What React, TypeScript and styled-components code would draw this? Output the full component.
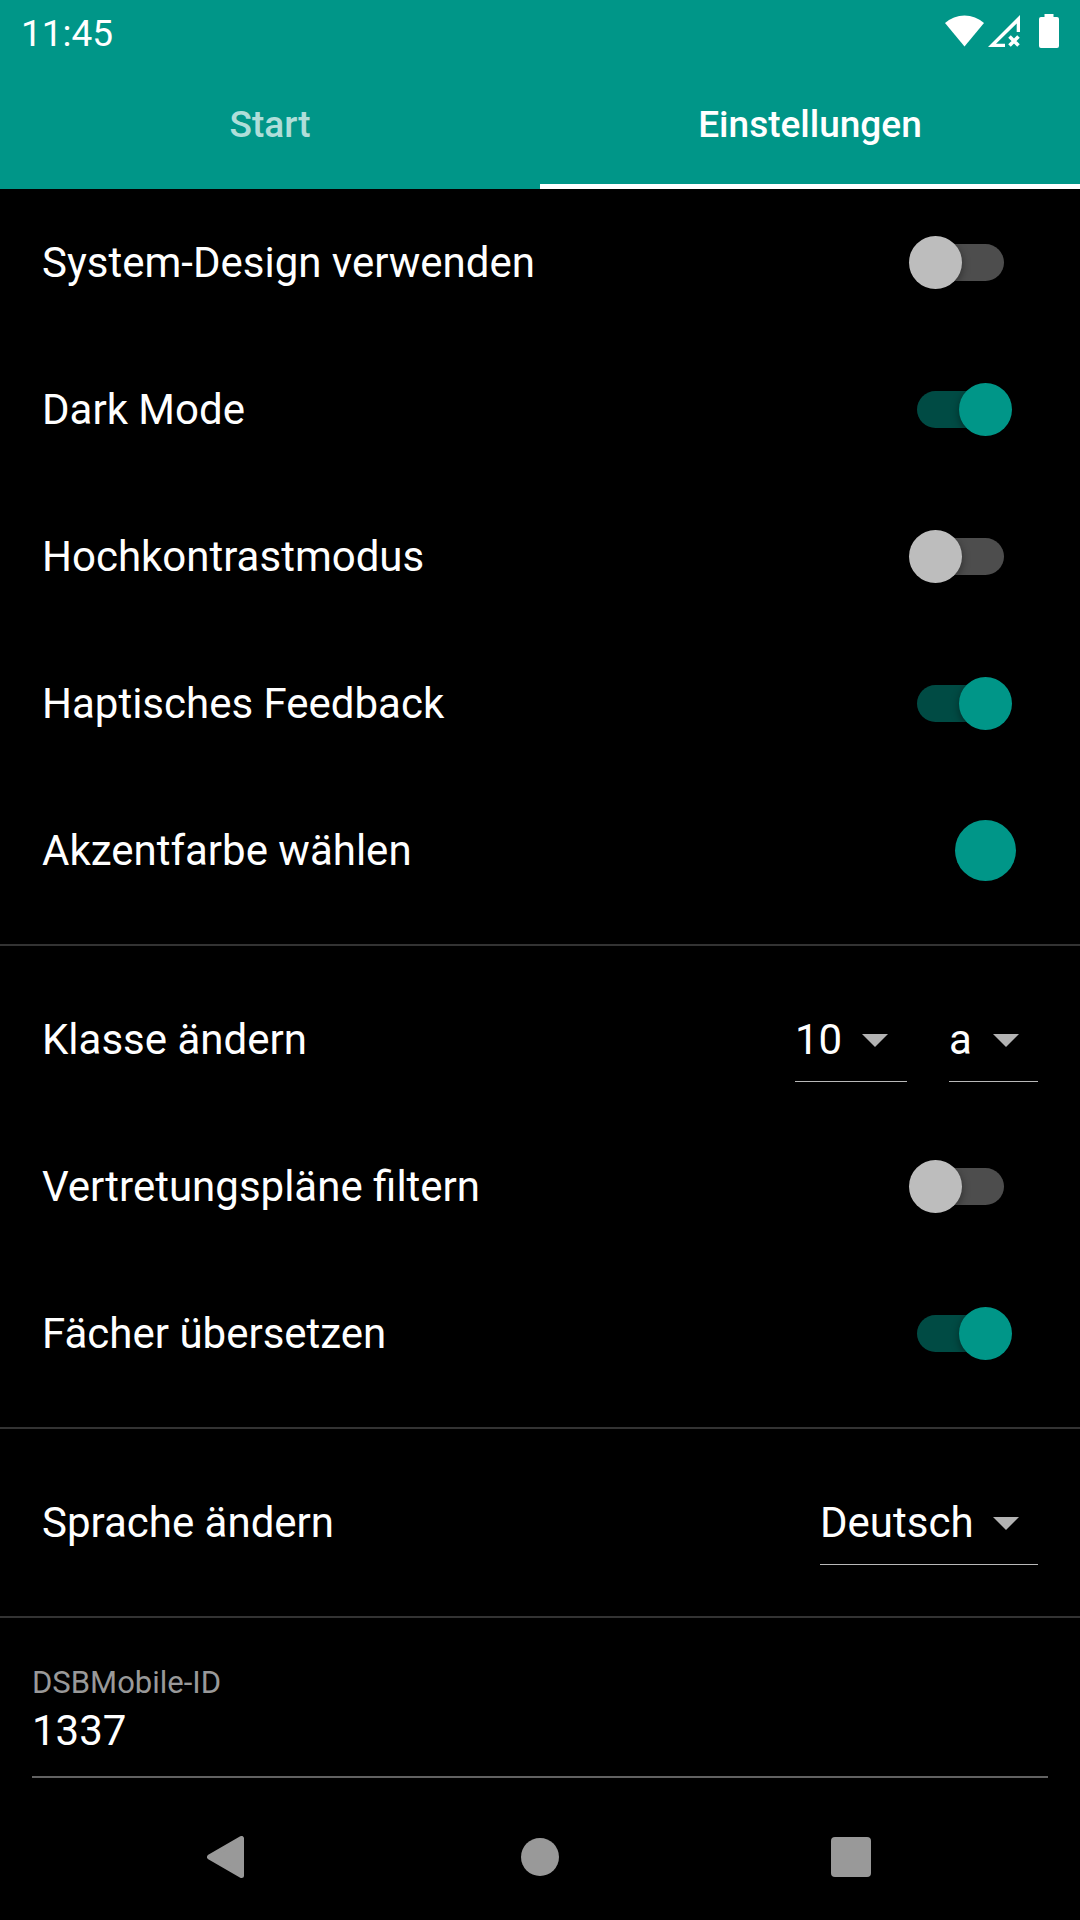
import React, { useState } from "react";
import styled, { createGlobalStyle } from "styled-components";

const GlobalStyle = createGlobalStyle`
  *, *::before { box-sizing: border-box; }
  body { margin: 0; background: #000; }
  button, input, select { font-family: inherit; margin: 0; }
`;

const accent = "#009688";

const Screen = styled.div`
  display: flex;
  flex-direction: column;
  min-height: 100vh;
  background: #000;
  color: #fff;
  font-family: Roboto, "Noto Sans", sans-serif;
  font-size: 42px;
  line-height: 50px;
`;

const Header = styled.header`
  background: ${accent};
`;

const StatusBar = styled.div`
  display: flex;
  align-items: flex-start;
  justify-content: space-between;
  height: 63px;
  padding: 14px 21px 0;
`;

const Clock = styled.time`
  font-size: 37px;
  line-height: 40px;
`;

const StatusIcons = styled.div`
  display: flex;
  gap: 4px;

  svg {
    display: block;
    fill: #fff;
  }
`;

const Tabs = styled.div`
  display: flex;
  height: 126px;
`;

const Tab = styled.button<{ $active: boolean }>`
  flex: 1;
  padding: 2px 0 0;
  border: 0;
  border-bottom: 5px solid ${(p) => (p.$active ? "#fff" : "transparent")};
  background: none;
  color: ${(p) => (p.$active ? "#fff" : "rgba(255, 255, 255, 0.7)")};
  font-size: 37px;
  font-weight: 500;
`;

const Row = styled.div`
  display: flex;
  align-items: center;
  gap: 42px;
  height: 147px;
  padding: 0 42px;
`;

const RowLabel = styled.label`
  flex: 1;
`;

const Switch = styled.input`
  appearance: none;
  position: relative;
  width: 87px;
  height: 37px;
  margin: 0 34px;
  border-radius: 19px;
  background: #4d4d4d;

  &::before {
    content: "";
    position: absolute;
    top: -8px;
    left: -8px;
    width: 53px;
    height: 53px;
    border-radius: 50%;
    background: #bdbdbd;
    box-shadow: 0 3px 8px rgba(0, 0, 0, 0.4);
  }

  &:checked {
    background: #004b44;
  }

  &:checked::before {
    left: 42px;
    background: ${accent};
  }
`;

const ColorDot = styled.button`
  width: 61px;
  height: 61px;
  margin-right: 22px;
  padding: 0;
  border: 0;
  border-radius: 50%;
  background: ${accent};
`;

const Divider = styled.hr`
  width: 100%;
  height: 2px;
  margin: 20px 0;
  border: 0;
  background: #333;
`;

const SelectBox = styled.div`
  display: grid;
  align-items: center;
  border-bottom: 1px solid #b9b9b9;

  & > * {
    grid-area: 1 / 1;
  }
`;

const SelectInput = styled.select`
  appearance: none;
  min-width: 89px;
  height: 84px;
  padding: 0 64px 0 0;
  border: 0;
  background: transparent;
  color: #fff;
  font-size: 42px;
`;

const Caret = styled.svg`
  justify-self: end;
  margin: 2px 19px 0 0;
  fill: #b3b3b3;
  pointer-events: none;
`;

const Field = styled.div`
  display: flex;
  flex-direction: column;
  gap: 3px;
  padding: 26px 32px 0;
`;

const FieldLabel = styled.label`
  color: #999;
  font-size: 31px;
  line-height: 38px;
`;

const TextInput = styled.input`
  width: 100%;
  height: 73px;
  padding: 0 0 21px;
  border: 0;
  border-bottom: 2px solid #626262;
  border-radius: 0;
  background: transparent;
  color: #fff;
  font-size: 42px;
`;

const NavBar = styled.nav`
  display: flex;
  height: 126px;
  margin-top: auto;
  padding: 0 72px;
`;

const NavButton = styled.button`
  display: flex;
  flex: 1;
  align-items: center;
  justify-content: center;
  padding: 0;
  border: 0;
  background: none;

  svg {
    fill: #999;
    stroke: #999;
    stroke-linejoin: round;
  }
`;

function ToggleRow({ id, label, initial }: { id: string; label: string; initial: boolean }) {
  const [on, setOn] = useState(initial);
  return (
    <Row>
      <RowLabel htmlFor={id}>{label}</RowLabel>
      <Switch id={id} type="checkbox" role="switch" checked={on} onChange={() => setOn(!on)} />
    </Row>
  );
}

function Dropdown({ id, label, value }: { id: string; label: string; value: string }) {
  return (
    <SelectBox>
      <SelectInput id={id} aria-label={label} defaultValue={value}>
        <option>{value}</option>
      </SelectInput>
      <Caret width="26" height="13" viewBox="0 0 26 13" aria-hidden="true">
        <path d="M0 0H26L13 13Z" />
      </Caret>
    </SelectBox>
  );
}

export default function App() {
  const [tab, setTab] = useState("Einstellungen");
  return (
    <Screen>
      <GlobalStyle />
      <Header>
        <StatusBar>
          <Clock>11:45</Clock>
          <StatusIcons>
            <svg width="39" height="34" viewBox="0 0 39 34" aria-hidden="true">
              <path d="M0 9A29 29 0 0 1 39 9L19.500 32.500Z" />
            </svg>
            <svg width="32" height="34" viewBox="0 0 32 34" aria-hidden="true">
              <path d="M0 33L32 1V18H28.700V9.500L8 29.800H17V33Z" />
              <path d="M21.500 22.500L30.500 31.500M30.500 22.500L21.500 31.500" stroke="#fff" strokeWidth="3.600" />
            </svg>
            <svg width="35" height="34" viewBox="0 0 35 34" aria-hidden="true">
              <path d="M20.500 0H29.500V3H33A2 2 0 0 1 35 5V32A2 2 0 0 1 33 34H17A2 2 0 0 1 15 32V5A2 2 0 0 1 17 3H20.500Z" />
            </svg>
          </StatusIcons>
        </StatusBar>
        <Tabs role="tablist">
          {["Start", "Einstellungen"].map((name) => (
            <Tab
              key={name}
              role="tab"
              aria-selected={tab === name}
              $active={tab === name}
              onClick={() => setTab(name)}
            >
              {name}
            </Tab>
          ))}
        </Tabs>
      </Header>
      <main>
        <ToggleRow id="system-design" label="System-Design verwenden" initial={false} />
        <ToggleRow id="dark-mode" label="Dark Mode" initial={true} />
        <ToggleRow id="high-contrast" label="Hochkontrastmodus" initial={false} />
        <ToggleRow id="haptic" label="Haptisches Feedback" initial={true} />
        <Row>
          <RowLabel htmlFor="accent">Akzentfarbe wählen</RowLabel>
          <ColorDot id="accent" type="button" />
        </Row>
        <Divider />
        <Row>
          <RowLabel htmlFor="grade">Klasse ändern</RowLabel>
          <Dropdown id="grade" label="Klassenstufe" value="10" />
          <Dropdown id="letter" label="Klassenbuchstabe" value="a" />
        </Row>
        <ToggleRow id="filter" label="Vertretungspläne filtern" initial={false} />
        <ToggleRow id="translate" label="Fächer übersetzen" initial={true} />
        <Divider />
        <Row>
          <RowLabel htmlFor="language">Sprache ändern</RowLabel>
          <Dropdown id="language" label="Sprache" value="Deutsch" />
        </Row>
        <Divider />
        <Field>
          <FieldLabel htmlFor="dsb-id">DSBMobile-ID</FieldLabel>
          <TextInput id="dsb-id" type="text" inputMode="numeric" defaultValue="1337" />
        </Field>
      </main>
      <NavBar>
        <NavButton type="button" aria-label="Zurück">
          <svg width="42" height="42" viewBox="0 0 42 42">
            <path d="M2.500 21L34.500 2.500V39.500Z" strokeWidth="5" />
          </svg>
        </NavButton>
        <NavButton type="button" aria-label="Startbildschirm">
          <svg width="42" height="42" viewBox="0 0 42 42">
            <circle cx="21" cy="21" r="19" strokeWidth="0" />
          </svg>
        </NavButton>
        <NavButton type="button" aria-label="Übersicht">
          <svg width="42" height="42" viewBox="0 0 42 42">
            <rect x="0" y="1" width="40" height="40" rx="4" strokeWidth="0" />
          </svg>
        </NavButton>
      </NavBar>
    </Screen>
  );
}
